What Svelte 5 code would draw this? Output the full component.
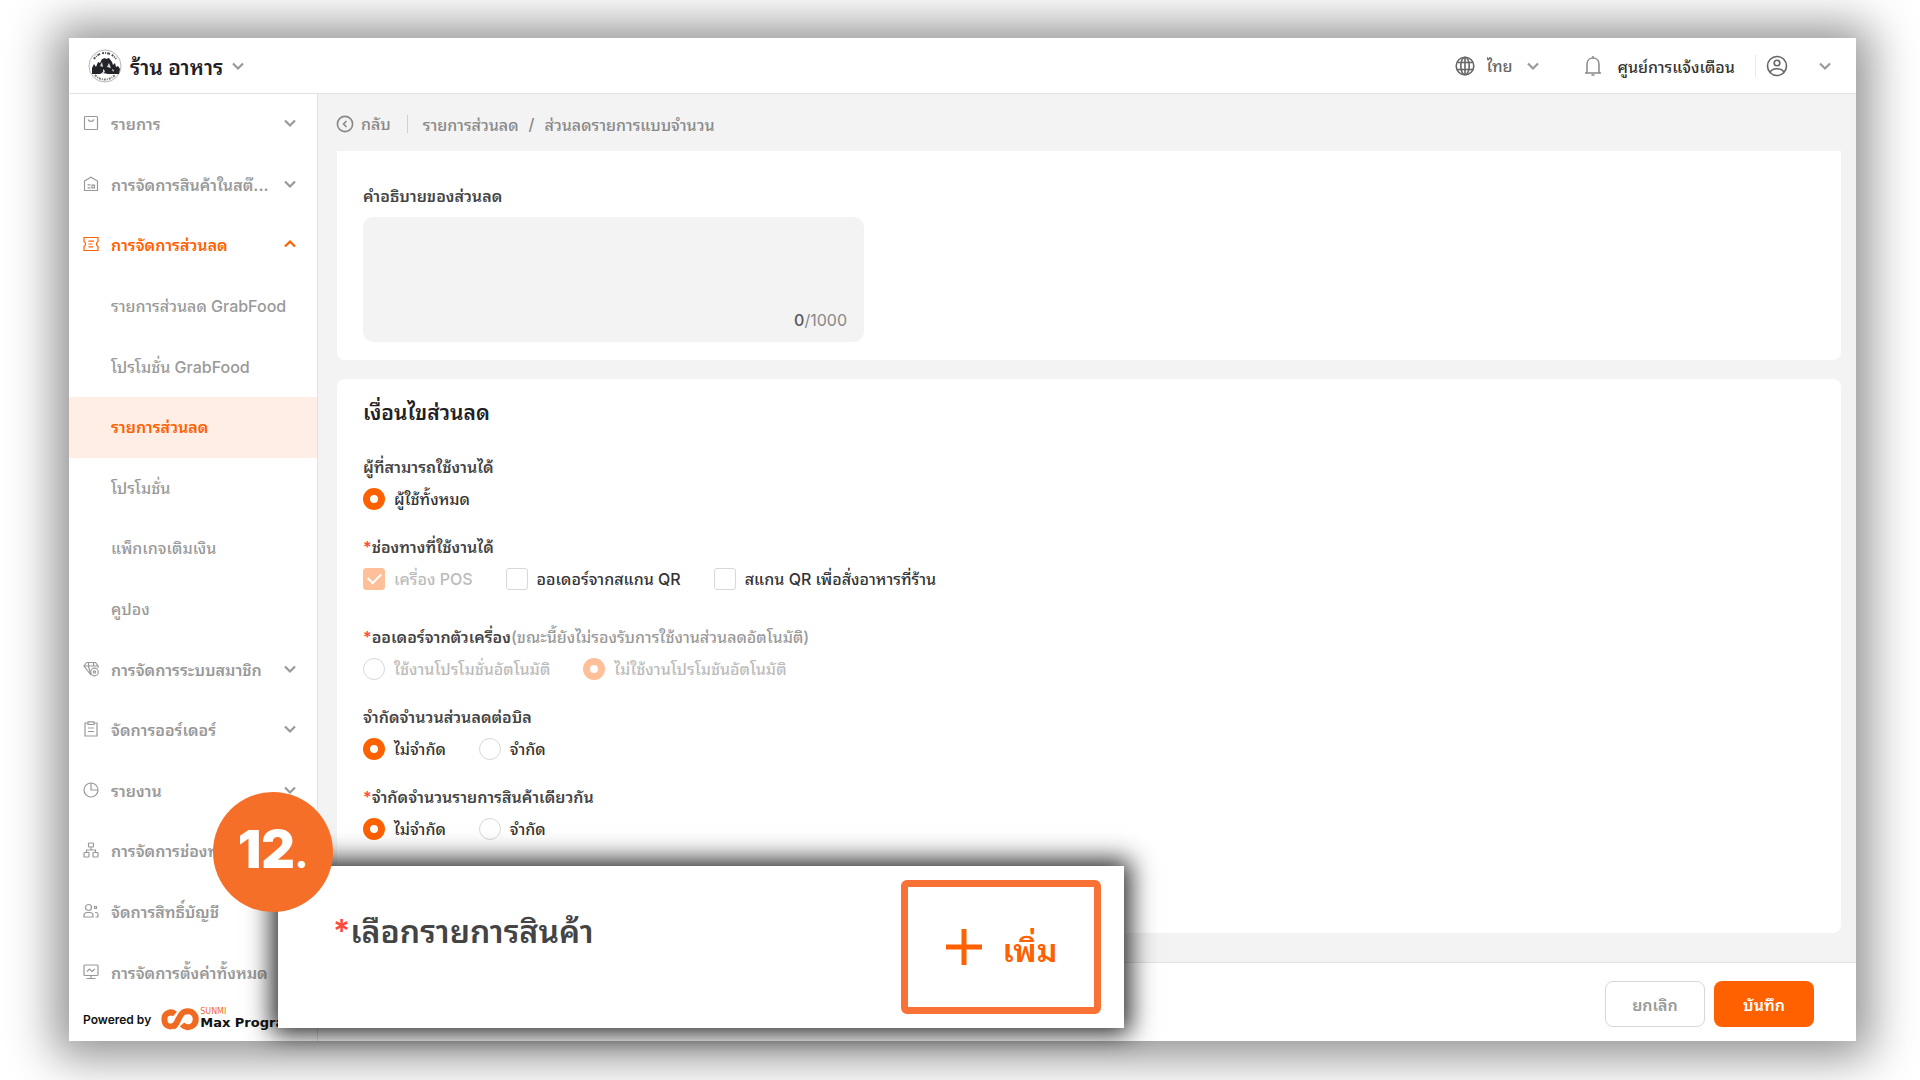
<script>
  let language = $state("th");
  let description = $state("");
  let perBill = $state("unlimited");
  let sameItem = $state("unlimited");

  const menu = [
    { label: "รายการ", icon: "list" },
    { label: "การจัดการสินค้าในสต๊...", icon: "stock" },
    {
      label: "การจัดการส่วนลด",
      icon: "discount",
      open: true,
      children: [
        { label: "รายการส่วนลด GrabFood" },
        { label: "โปรโมชั่น GrabFood" },
        { label: "รายการส่วนลด", active: true },
        { label: "โปรโมชั่น" },
        { label: "แพ็กเกจเติมเงิน" },
        { label: "คูปอง" }
      ]
    },
    { label: "การจัดการระบบสมาชิก", icon: "member" },
    { label: "จัดการออร์เดอร์", icon: "order" },
    { label: "รายงาน", icon: "report" },
    { label: "การจัดการช่องทาง", icon: "channel" },
    { label: "จัดการสิทธิ์บัญชี", icon: "account" },
    { label: "การจัดการตั้งค่าทั้งหมด", icon: "settings" }
  ];
</script>

{#snippet chevron(up)}
  <svg class="chevron" viewBox="0 0 14 10" width="14" height="10" aria-hidden="true">
    <path d={up ? "M2 7.5 7 2.5 12 7.5" : "M2 2.5 7 7.5 12 2.5"} />
  </svg>
{/snippet}

{#snippet icon(name)}
  <svg class="icon" viewBox="0 0 16 16" width="16" height="16" aria-hidden="true">
    {#if name === "list"}
      <rect x="1.5" y="1.5" width="13" height="13" rx="1" />
      <path d="M5 4.5c1 2.4 5 2.4 6 0" />
    {:else if name === "stock"}
      <path d="M1.500 5 8 1.200 14.500 5v9.500h-13z" />
      <path d="M4.500 8.800h3M4.500 11.800h3M9 9.200h2.500v2.600H9z" />
    {:else if name === "discount"}
      <path d="M1 1.500h14v4c-2 .8-2 4.200 0 5v4H1v-4c2-.8 2-4.200 0-5z" />
      <path d="M5.500 5.200h5.500M5.500 8h3.800M5.500 10.800h4.500" />
    {:else if name === "member"}
      <path d="M3.500 1.500h9L15 5v2M8 14 1 5l2.500-3.500M1 5h14M5.500 1.500v4L8 14M10.500 1.500v4" />
      <circle cx="11.500" cy="11" r="3.800" />
      <circle cx="11.500" cy="11" r="1.200" />
    {:else if name === "order"}
      <path d="M5 2H2v13h12V2h-3" />
      <path d="M5 .8h6v2.700H5zM5 7h6M5 10.500h6" />
    {:else if name === "report"}
      <circle cx="8" cy="8" r="7" />
      <path d="M8 1v7h7" />
    {:else if name === "channel"}
      <rect x="5.500" y="1" width="5" height="4" rx=".5" />
      <rect x="1" y="10.500" width="5" height="4.500" rx=".5" />
      <rect x="10" y="10.500" width="5" height="4.500" rx=".5" />
      <path d="M8 5v3M3.500 10.500V8h9v2.500" />
    {:else if name === "account"}
      <circle cx="5.500" cy="4.500" r="3" />
      <path d="M1 14v-1.500c0-2 1-3 3-3h3c2 0 3 1 3 3V14zM11.500 3.500h2v2h-2zM12 9.500h1.500c1 0 1.500 1 1.500 2V14h-2.500" />
    {:else if name === "settings"}
      <rect x="1" y="1" width="14" height="10.500" rx="1" />
      <path d="m4 7.500 2.500-2.500L9 7.500 12 5M3.500 14.500h9M8 11.500v3" />
    {/if}
  </svg>
{/snippet}

<div class="stage">
  <div class="window">
    <header>
      <button class="store" type="button">
        <svg viewBox="0 0 34 34" width="34" height="34" aria-hidden="true">
          <circle cx="17" cy="17" r="16" fill="#fff" stroke="#b5b5b5" />
          <path d="M4 25v-6l2-4 2 3 2-5 2 1 2-4 3-1 1 1 3-1 3 4 1 3 2-2 1 4 2-1 2 3-1 5z" fill="#22242a" />
          <path d="m12 17 2-4 1 5zm7 1 2-4 2 5zM15 20l2 2-1 2 4 1h-8l3-2zM24 20l2 1-1 2z" fill="#ddd" />
          <path d="M6 10C11 2 23 2 28 10" fill="none" stroke="#555" stroke-width="2" stroke-dasharray="2 1 1 1 3 2" />
          <path d="M7 26c6 6 14 6 20 0" fill="none" stroke="#777" stroke-width="2" stroke-dasharray="2 1 1 1" />
        </svg>
        <span>ร้าน อาหาร</span>
        {@render chevron(false)}
      </button>

      <div class="tools">
        <label class="language">
          <svg class="globe" viewBox="0 0 20 20" width="20" height="20" aria-hidden="true">
            <circle cx="10" cy="10" r="8.800" />
            <ellipse cx="10" cy="10" rx="4.200" ry="8.800" />
            <path d="M10 1.200v17.600M2.300 6.500h15.400M2.300 13.500h15.400" />
          </svg>
          <select bind:value={language} aria-label="ภาษา">
            <option value="th">ไทย</option>
          </select>
          {@render chevron(false)}
        </label>
        <button class="notice" type="button">
          <svg class="bell" viewBox="0 0 18 22" width="18" height="22" aria-hidden="true">
            <path d="M1 18h16M3 18V9c0-8 12-8 12 0v9M9 3V1M7.500 20h3" />
          </svg>
          <span>ศูนย์การแจ้งเตือน</span>
        </button>
        <button class="user" type="button" aria-label="บัญชีผู้ใช้">
          <svg class="globe" viewBox="0 0 22 22" width="22" height="22" aria-hidden="true">
            <circle cx="11" cy="11" r="9.500" />
            <circle cx="11" cy="8" r="2.800" />
            <path d="M4 17.500c2-5 12-5 14 0" />
          </svg>
          {@render chevron(false)}
        </button>
      </div>
    </header>

    <div class="body">
      <aside>
        <nav>
          {#each menu as item}
            <button class="item" class:open={item.open} type="button">
              {@render icon(item.icon)}
              <span>{item.label}</span>
              {@render chevron(item.open)}
            </button>
            {#each item.children ?? [] as child}
              <a class="child" class:active={child.active} href="#discount">{child.label}</a>
            {/each}
          {/each}
        </nav>
        <div class="powered">
          <span>Powered by</span>
          <svg viewBox="0 0 40 24" width="40" height="24" aria-hidden="true">
            <path d="M16 17c-3 3-7 3-9.500 1S3.500 9 6.500 7 12 4.500 15 7" />
            <path d="M13 19.500c4-1 5-9 9-13 3-3 8.500-3 11.500 0s3 8.500 0 11.500-8 3-11.500-.5" />
          </svg>
          <div class="brand">
            <small>SUNMI</small>
            <strong>Max Program</strong>
          </div>
        </div>
      </aside>

      <main>
        <div class="crumbs">
          <a class="back" href="#back">
            <svg viewBox="0 0 18 18" width="18" height="18" aria-hidden="true">
              <circle cx="9" cy="9" r="7.600" />
              <path d="M10.500 6 7.500 9l3 3" />
            </svg>
            กลับ
          </a>
          <a href="#discount">รายการส่วนลด</a>
          <span>/</span>
          <span>ส่วนลดรายการแบบจำนวน</span>
        </div>

        <section class="card first">
          <label class="title" for="description">คำอธิบายของส่วนลด</label>
          <div class="textbox">
            <textarea id="description" maxlength="1000" bind:value={description}></textarea>
            <span class="count"><b>{description.length}</b>/1000</span>
          </div>
        </section>

        <section class="card second">
          <h2>เงื่อนไขส่วนลด</h2>

          <fieldset>
            <legend>ผู้ที่สามารถใช้งานได้</legend>
            <div class="options">
              <label><input type="radio" name="users" checked />ผู้ใช้ทั้งหมด</label>
            </div>
          </fieldset>

          <fieldset class="wide">
            <legend><i>*</i>ช่องทางที่ใช้งานได้</legend>
            <div class="options">
              <label class="disabled"><input type="checkbox" checked disabled />เครื่อง POS</label>
              <label><input type="checkbox" />ออเดอร์จากสแกน QR</label>
              <label><input type="checkbox" />สแกน QR เพื่อสั่งอาหารที่ร้าน</label>
            </div>
          </fieldset>

          <fieldset>
            <legend><i>*</i>ออเดอร์จากตัวเครื่อง<em>(ขณะนี้ยังไม่รองรับการใช้งานส่วนลดอัตโนมัติ)</em></legend>
            <div class="options">
              <label class="disabled"><input type="radio" name="auto" disabled />ใช้งานโปรโมชั่นอัตโนมัติ</label>
              <label class="disabled"><input type="radio" name="auto" checked disabled />ไม่ใช้งานโปรโมชันอัตโนมัติ</label>
            </div>
          </fieldset>

          <fieldset>
            <legend>จำกัดจำนวนส่วนลดต่อบิล</legend>
            <div class="options">
              <label><input type="radio" value="unlimited" bind:group={perBill} />ไม่จำกัด</label>
              <label><input type="radio" value="limited" bind:group={perBill} />จำกัด</label>
            </div>
          </fieldset>

          <fieldset>
            <legend><i>*</i>จำกัดจำนวนรายการสินค้าเดียวกัน</legend>
            <div class="options">
              <label><input type="radio" value="unlimited" bind:group={sameItem} />ไม่จำกัด</label>
              <label><input type="radio" value="limited" bind:group={sameItem} />จำกัด</label>
            </div>
          </fieldset>
        </section>

        <footer>
          <button class="cancel" type="button">ยกเลิก</button>
          <button class="save" type="button">บันทึก</button>
        </footer>
      </main>
    </div>

    <div class="callout">
      <div class="step">12<span>.</span></div>
      <p><i>*</i>เลือกรายการสินค้า</p>
      <button type="button">
        <svg viewBox="0 0 38 38" width="38" height="38" aria-hidden="true">
          <path d="M19 1v36M1 19h36" />
        </svg>
        เพิ่ม
      </button>
    </div>
  </div>
</div>

<style>
  :global(body) {
    background: #fff;
    font-family: Inter, "Noto Sans Thai Looped", "Noto Looped Thai", Loma, Waree, Garuda, "Noto Sans Thai", "Noto Sans", sans-serif;
    font-size: 16px;
    color: #444;
  }

  .stage,
  .stage * {
    box-sizing: border-box;
  }

  .stage {
    display: flex;
    min-height: 100vh;
    padding: 38px 64px 39px 69px;
    overflow: hidden;
  }

  .window {
    position: relative;
    flex: 1;
    display: flex;
    flex-direction: column;
    background: #fff;
    box-shadow: 0 2px 44px 14px rgba(0, 0, 0, 0.44);
  }

  button,
  select,
  textarea {
    font: inherit;
    color: inherit;
    background: none;
    border: none;
    padding: 0;
    cursor: pointer;
  }

  a {
    color: inherit;
    text-decoration: none;
  }

  svg {
    flex: none;
    display: block;
  }

  .chevron,
  .icon,
  .globe,
  .bell,
  .back svg {
    fill: none;
    stroke: currentColor;
    stroke-width: 1.2;
  }

  .chevron {
    stroke: #999;
    stroke-width: 2.2;
  }

  .globe {
    stroke: #666;
    stroke-width: 1.6;
  }

  .bell {
    stroke: #888;
    stroke-width: 1.5;
  }

  header {
    display: flex;
    justify-content: space-between;
    align-items: center;
    height: 56px;
    padding: 0 24px 0 19px;
    border-bottom: 1px solid #e2e2e2;
  }

  .store {
    display: flex;
    align-items: center;
    gap: 8px;
    font-size: 21px;
    font-weight: 600;
    color: #1f2126;
  }

  .tools,
  .language,
  .notice,
  .user {
    display: flex;
    align-items: center;
  }

  .language {
    gap: 12px;
    color: #666;
    font-weight: 500;
  }

  select {
    appearance: none;
  }

  .notice {
    gap: 16px;
    margin-left: 44px;
    font-weight: 500;
    color: #333;
  }

  .user {
    gap: 30px;
    margin-left: 20px;
    padding-left: 10px;
    border-left: 1px solid #e8e8e8;
  }

  .body {
    flex: 1;
    display: flex;
  }

  aside {
    flex: none;
    display: flex;
    flex-direction: column;
    width: 249px;
    border-right: 1px solid #e2e2e2;
  }

  nav {
    flex: 1;
    display: grid;
    grid-auto-rows: 1fr;
    color: #999;
    font-weight: 600;
  }

  .item {
    display: flex;
    align-items: center;
    gap: 12px;
    padding: 0 20px 2px 14px;
    white-space: nowrap;
    text-align: left;
  }

  .item span {
    flex: 1;
  }

  .item.open,
  .item.open .chevron,
  .child.active {
    color: #ff6000;
    stroke: #ff6000;
    font-weight: 600;
  }

  .child {
    display: flex;
    align-items: center;
    padding: 0 0 2px 42px;
    white-space: nowrap;
    font-weight: 500;
  }

  .child.active {
    background: #ffeee5;
    stroke: none;
  }

  .powered {
    display: flex;
    align-items: center;
    height: 38px;
    padding: 0 0 6px 14px;
    font-size: 12px;
    font-weight: 600;
    color: #111;
    white-space: nowrap;
  }

  .powered svg {
    margin-left: 9px;
    fill: none;
    stroke: #f06a22;
    stroke-width: 6;
  }

  .brand {
    display: flex;
    flex-direction: column;
    font-family: "DejaVu Sans", sans-serif;
  }

  .brand small {
    font-size: 8px;
    line-height: 8px;
    font-weight: 400;
    color: #f06a22;
  }

  .brand strong {
    font-size: 13px;
    line-height: 14px;
    font-weight: 700;
  }

  main {
    flex: 1;
    display: flex;
    flex-direction: column;
    background: #f3f3f3;
  }

  .crumbs {
    display: flex;
    align-items: center;
    gap: 10px;
    height: 57px;
    padding: 3px 0 0 18px;
    color: #888;
    font-weight: 500;
  }

  .back {
    display: flex;
    align-items: center;
    gap: 7px;
    padding-right: 16px;
    margin-right: 5px;
    border-right: 1px solid #d0d0d0;
    line-height: 16px;
  }

  .back svg {
    stroke-width: 1.6;
  }

  .card {
    margin: 0 15px 19px 19px;
    padding: 0 26px;
    background: #fff;
    border-radius: 8px;
  }

  .first {
    padding-top: 32px;
    padding-bottom: 18px;
    border-radius: 0 0 8px 8px;
  }

  .title {
    display: block;
    height: 34px;
    line-height: 26px;
    font-weight: 600;
  }

  .textbox {
    position: relative;
    width: 501px;
    max-width: 100%;
  }

  textarea {
    display: block;
    width: 100%;
    height: 125px;
    padding: 12px 16px;
    border-radius: 10px;
    background: #f3f3f3;
    resize: none;
  }

  .count {
    position: absolute;
    right: 17px;
    bottom: 12px;
    color: #888;
  }

  .count b {
    font-weight: 500;
    color: #555;
  }

  .second {
    flex: 1;
    padding-top: 18px;
    margin-bottom: 29px;
  }

  h2 {
    margin: 0 0 26px;
    font-size: 21px;
    line-height: 32px;
    font-weight: 600;
    color: #1f2126;
  }

  fieldset {
    margin: 0 0 24px;
    padding: 0;
    border: none;
    font-weight: 600;
  }

  fieldset.wide {
    margin-bottom: 34px;
  }

  legend {
    padding: 0;
    line-height: 24px;
  }

  i {
    font-style: normal;
    color: #ff4a3d;
  }

  em {
    font-style: normal;
    font-weight: 500;
    color: #999;
  }

  .options {
    display: flex;
    gap: 33px;
    padding-top: 8px;
    line-height: 24px;
    font-weight: 500;
    color: #333;
  }

  .options label {
    display: flex;
    align-items: center;
    gap: 9px;
  }

  .options .disabled {
    color: #bbb;
  }

  input {
    appearance: none;
    width: 22px;
    height: 22px;
    margin: 0;
    border: 1px solid #d8d8d8;
    border-radius: 3px;
    background: #fff;
  }

  input[type="radio"] {
    border-radius: 50%;
  }

  input[type="radio"]:checked {
    border: 7px solid #ff6000;
  }

  input[type="checkbox"]:checked {
    display: grid;
    place-items: center;
    border-color: #ff6000;
    background: #ff6000;
  }

  input[type="checkbox"]:checked::after {
    content: "";
    width: 11px;
    height: 6px;
    margin-bottom: 4px;
    border: solid #fff;
    border-width: 0 0 2px 2px;
    rotate: -45deg;
  }

  input:disabled:checked {
    opacity: 0.4;
  }

  footer {
    display: flex;
    justify-content: flex-end;
    align-items: center;
    gap: 9px;
    height: 79px;
    padding: 4px 42px 0 0;
    background: #fff;
    border-top: 1px solid #e2e2e2;
  }

  footer button {
    width: 100px;
    height: 46px;
    border-radius: 8px;
    font-weight: 600;
  }

  .cancel {
    border: 1px solid #d8d8d8;
    color: #999;
  }

  .save {
    background: #ff6000;
    color: #fff;
  }

  .callout {
    position: absolute;
    left: 209px;
    bottom: 13px;
    display: flex;
    justify-content: space-between;
    width: 846px;
    height: 162px;
    padding: 14px 23px 14px 55px;
    background: #fff;
    box-shadow: 0 0 24px 6px rgba(0, 0, 0, 0.85);
    font-size: 32px;
    font-weight: 600;
  }

  .callout p {
    margin: 28px 0 0;
    line-height: 48px;
  }

  .callout button {
    display: flex;
    justify-content: center;
    align-items: center;
    gap: 20px;
    width: 200px;
    border: 7px solid #f77234;
    border-radius: 6px;
    color: #ff6000;
    font-weight: 600;
  }

  .callout svg {
    stroke: #ff6000;
    stroke-width: 5;
  }

  .step {
    position: absolute;
    left: -65px;
    top: -74px;
    display: flex;
    justify-content: center;
    align-items: baseline;
    width: 120px;
    height: 120px;
    border-radius: 50%;
    background: #f66f28;
    color: #fff;
    font-size: 52px;
    font-weight: 900;
    line-height: 116px;
  }

  .step span {
    font-size: 36px;
  }
</style>
